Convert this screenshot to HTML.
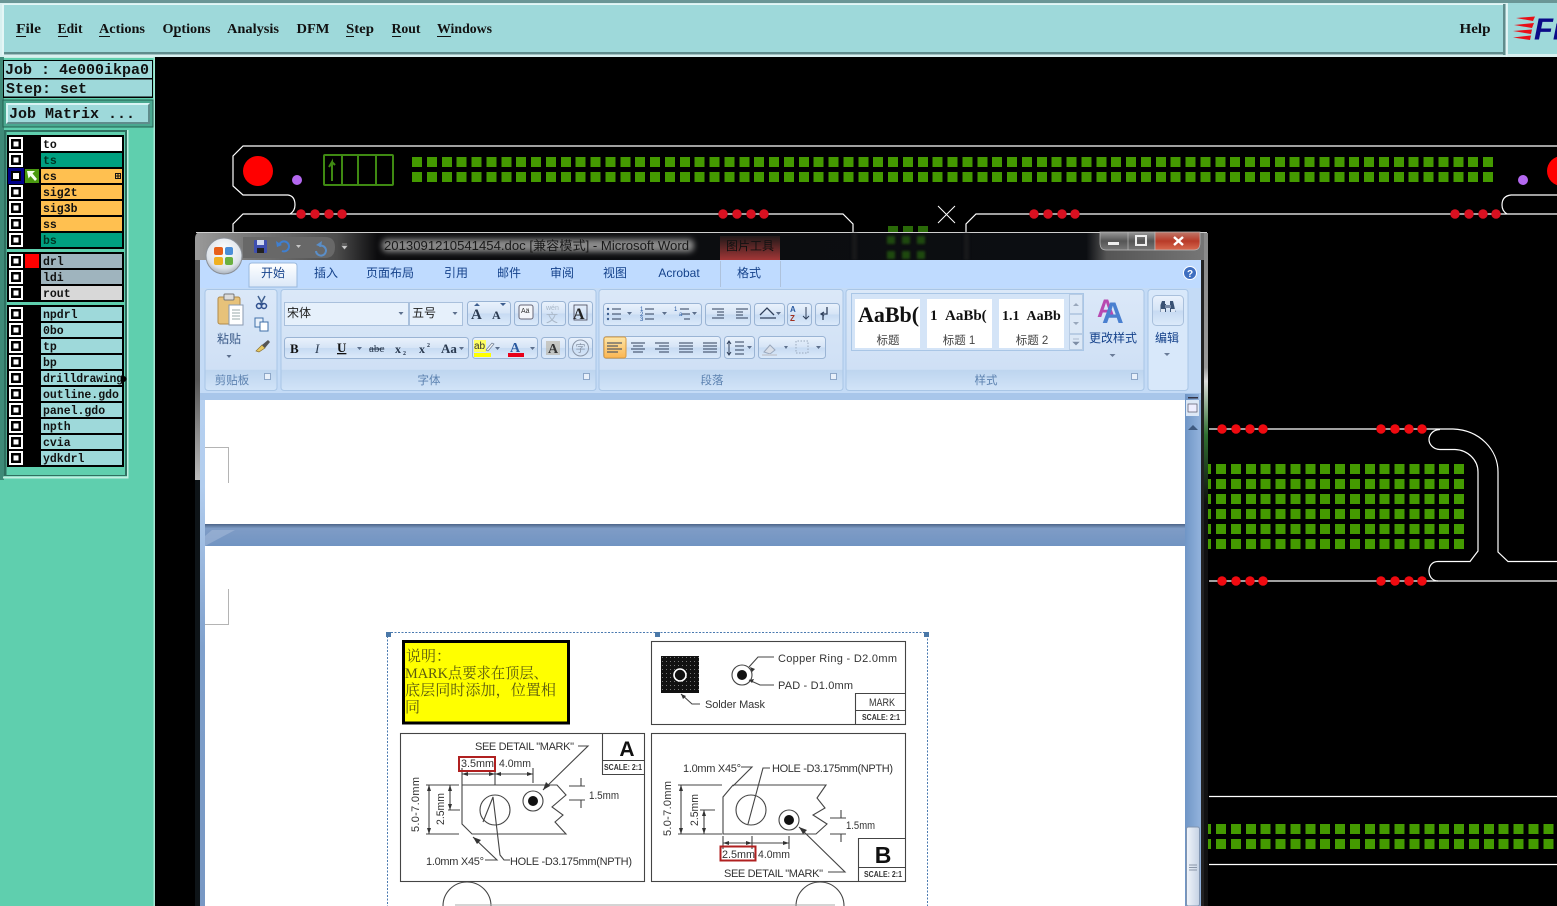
<!DOCTYPE html>
<html><head><meta charset="utf-8"><title>CAM</title>
<style>
html,body{margin:0;padding:0;background:#000;width:1557px;height:906px;overflow:hidden}
svg{display:block;position:absolute;left:0;top:0}
.m{font:bold 14px "Liberation Serif",serif;fill:#111}
.mo{font:bold 15px "Liberation Mono",monospace;fill:#111}
.l{font:bold 11.5px "Liberation Mono",monospace;fill:#111}
.t{font:12px "Liberation Sans","Noto Sans CJK SC",sans-serif;fill:#15428b}
.g{font:11.5px "Liberation Sans","Noto Sans CJK SC",sans-serif;fill:#5c82b0;text-anchor:middle}
.k{font:12px "Liberation Serif","Noto Sans CJK SC",sans-serif;fill:#222}
.s{font:11.5px "Liberation Sans","Noto Sans CJK SC",sans-serif;fill:#444;text-anchor:middle}
.d{font:11px "Liberation Sans",sans-serif;fill:#333}
.sc{font:bold 8px "Liberation Sans",sans-serif;fill:#333}
</style></head><body>
<svg width="1557" height="906" viewBox="0 0 1557 906" xmlns="http://www.w3.org/2000/svg">
<defs>
<linearGradient id="tb" x1="0" x2="1" y1="0" y2="0"><stop offset="0" stop-color="#9a9a9a"/><stop offset=".05" stop-color="#7a7a7a"/><stop offset=".14" stop-color="#4c4c4c"/><stop offset=".18" stop-color="#0c0c0e"/><stop offset=".88" stop-color="#0c0e12"/><stop offset=".9" stop-color="#555"/><stop offset="1" stop-color="#777"/></linearGradient>
<linearGradient id="rb" x1="0" x2="0" y1="0" y2="1"><stop offset="0" stop-color="#dbe8f8"/><stop offset=".79" stop-color="#cfe0f5"/><stop offset=".8" stop-color="#bed5ef"/><stop offset="1" stop-color="#d2e4f8"/></linearGradient>
<linearGradient id="bt" x1="0" x2="0" y1="0" y2="1"><stop offset="0" stop-color="#eaf2fc"/><stop offset=".5" stop-color="#d5e4f6"/><stop offset=".5" stop-color="#c6daf2"/><stop offset="1" stop-color="#dceafa"/></linearGradient>
<linearGradient id="tab" x1="0" x2="0" y1="0" y2="1"><stop offset="0" stop-color="#fff"/><stop offset="1" stop-color="#dbe8f8"/></linearGradient>
<linearGradient id="or" x1="0" x2="0" y1="0" y2="1"><stop offset="0" stop-color="#fde6a8"/><stop offset="1" stop-color="#fbb552"/></linearGradient>
<linearGradient id="gap" x1="0" x2="0" y1="0" y2="1"><stop offset="0" stop-color="#4c6488"/><stop offset=".2" stop-color="#7f9cc6"/><stop offset="1" stop-color="#7194c2"/></linearGradient>
<linearGradient id="red" x1="0" x2="0" y1="0" y2="1"><stop offset="0" stop-color="#c0786a"/><stop offset=".5" stop-color="#b83a28"/><stop offset="1" stop-color="#d86a50"/></linearGradient>
<linearGradient id="gb" x1="0" x2="0" y1="0" y2="1"><stop offset="0" stop-color="#999"/><stop offset=".5" stop-color="#555"/><stop offset="1" stop-color="#777"/></linearGradient>
<linearGradient id="ctx" x1="0" x2="0" y1="0" y2="1"><stop offset="0" stop-color="#201818"/><stop offset="1" stop-color="#a83838"/></linearGradient>
<linearGradient id="lf" x1="0" x2="0" y1="0" y2="1"><stop offset="0" stop-color="#555"/><stop offset="1" stop-color="#bbb"/></linearGradient>
<linearGradient id="lb" gradientUnits="userSpaceOnUse" x1="0" x2="0" y1="260" y2="906"><stop offset="0" stop-color="#bcd6f4"/><stop offset=".35" stop-color="#b2cdee"/><stop offset=".6" stop-color="#7fa0cc"/><stop offset="1" stop-color="#7898c4"/></linearGradient>
<linearGradient id="rf" x1="0" x2="0" y1="0" y2="1"><stop offset="0" stop-color="#888"/><stop offset=".2" stop-color="#999"/><stop offset=".22" stop-color="#ddd"/><stop offset=".3" stop-color="#2f6f30"/><stop offset=".4" stop-color="#111"/><stop offset="1" stop-color="#111"/></linearGradient>
<linearGradient id="sb" x1="0" x2="1" y1="0" y2="0"><stop offset="0" stop-color="#6f95c6"/><stop offset="1" stop-color="#8fb0da"/></linearGradient>
<linearGradient id="th" x1="0" x2="1" y1="0" y2="0"><stop offset="0" stop-color="#f0f4fa"/><stop offset="1" stop-color="#c5d2e4"/></linearGradient>
<radialGradient id="ob" cx=".5" cy=".35" r=".7"><stop offset="0" stop-color="#fff"/><stop offset=".7" stop-color="#dde3ea"/><stop offset="1" stop-color="#9aa4b0"/></radialGradient>
<pattern id="sm" x="661" y="656" width="4" height="4" patternUnits="userSpaceOnUse"><rect width="4" height="4" fill="#111"/><rect x="1" y="1" width="1" height="1" fill="#777"/></pattern>
<filter id="bl" x="-10%" y="-50%" width="120%" height="200%"><feGaussianBlur stdDeviation="3"/></filter>
<filter id="bl2"><feGaussianBlur stdDeviation="1.4"/></filter>
<g id="rd"><circle cx="0" cy="0" r="4.7"/></g>
<g id="four"><use href="#rd"/><use href="#rd" x="14"/><use href="#rd" x="28"/><use href="#rd" x="41"/></g>
<g id="cb"><rect x="9" y="0" width="14" height="14" fill="#fff"/><rect x="11" y="2" width="10" height="10" fill="#000"/><rect x="13.5" y="4.5" width="5" height="5" fill="#fff"/></g>
</defs>

<rect width="1557" height="906" fill="#000"/>

<!-- menu bar -->
<rect width="1557" height="57" fill="#d8f0f0"/>
<rect width="1557" height="3" fill="#6a9696"/>
<rect x="2" y="4" width="1503" height="51" fill="#e4f6f6"/>
<rect x="4" y="5" width="1501" height="47" fill="#9ed9da"/>
<rect x="4" y="52" width="1501" height="2.5" fill="#5f8c8c"/>
<rect x="1503" y="4" width="2.5" height="51" fill="#5f8c8c"/>
<rect x="1508" y="3" width="49" height="51" fill="#9ed9da"/>
<rect x="1506" y="3" width="1.5" height="54" fill="#e4f6f6"/>
<g class="m">
<text x="16" y="33" textLength="25" lengthAdjust="spacingAndGlyphs">File</text>
<text x="57.5" y="33" textLength="25" lengthAdjust="spacingAndGlyphs">Edit</text>
<text x="99" y="33" textLength="46" lengthAdjust="spacingAndGlyphs">Actions</text>
<text x="162.5" y="33" textLength="48" lengthAdjust="spacingAndGlyphs">Options</text>
<text x="227" y="33" textLength="52" lengthAdjust="spacingAndGlyphs">Analysis</text>
<text x="296.5" y="33" textLength="33" lengthAdjust="spacingAndGlyphs">DFM</text>
<text x="346" y="33" textLength="28" lengthAdjust="spacingAndGlyphs">Step</text>
<text x="391.5" y="33" textLength="29" lengthAdjust="spacingAndGlyphs">Rout</text>
<text x="437" y="33" textLength="55" lengthAdjust="spacingAndGlyphs">Windows</text>
<text x="1459.5" y="33" textLength="31" lengthAdjust="spacingAndGlyphs">Help</text>
</g>
<g fill="#111">
<rect x="16" y="36" width="10" height="1"/><rect x="58" y="36" width="10" height="1"/><rect x="99" y="36" width="11" height="1"/><rect x="173" y="36" width="8" height="1"/><rect x="346" y="36" width="8" height="1"/><rect x="392" y="36" width="9" height="1"/><rect x="437" y="36" width="14" height="1"/>
</g>
<!-- logo -->
<g fill="#e81018"><path d="M1516 18 L1535 16.500 L1533 21Z"/><path d="M1514 25 L1534 23 L1532 28Z"/><path d="M1513 31 L1532 29.500 L1531 34Z"/><path d="M1513 37.500 L1531 35.500 L1530 40Z"/></g>
<text x="1534" y="39.500" font-family="Liberation Sans" font-weight="bold" font-style="italic" font-size="31" fill="#0a0a88">Fr</text>

<!-- left panel -->
<rect x="0" y="57" width="155" height="849" fill="#5fcfae"/>
<rect x="0" y="57" width="155" height="1" fill="#c8efe4"/>
<rect x="0" y="57" width="4" height="423" fill="#3f8a78"/>
<rect x="153.5" y="57" width="1.5" height="849" fill="#a5e8d5"/>
<rect x="3" y="60" width="150" height="38" fill="#000"/>
<rect x="4" y="61" width="148" height="17" fill="#9ed9da"/>
<rect x="4" y="79.5" width="148" height="17" fill="#9ed9da"/>
<text class="mo" x="5" y="74">Job : 4e000ikpa0</text>
<text class="mo" x="6" y="93">Step: set</text>
<rect x="3" y="100" width="150" height="27" fill="#4aa890" stroke="#236050"/>
<rect x="6" y="103" width="144" height="21" fill="#5f8c8c"/>
<path d="M6 103h144l-2 2H8v17l-2 2z" fill="#d8f4f4"/>
<rect x="8" y="105" width="140" height="17" fill="#9ed9da"/>
<text class="mo" x="9" y="118">Job Matrix ...</text>

<rect x="4" y="130" width="123" height="346" fill="#2f6f60"/>
<rect x="6.500" y="132" width="118.500" height="343" fill="#5fcfae"/>
<rect x="127" y="130" width="1.500" height="348" fill="#c0efe0"/>
<rect x="3" y="476.500" width="125.500" height="2" fill="#c0efe0"/>
<rect x="7" y="135" width="117" height="114" fill="#000"/>
<rect x="7" y="252" width="117" height="50" fill="#000"/>
<rect x="7" y="305" width="117" height="162" fill="#000"/>

<g>
<rect x="41" y="137" width="81" height="14" fill="#fff"/>
<rect x="41" y="153" width="81" height="14" fill="#00a080"/>
<rect x="41" y="169" width="81" height="14" fill="#ffc050"/>
<rect x="41" y="185" width="81" height="14" fill="#ffc050"/>
<rect x="41" y="201" width="81" height="14" fill="#ffc050"/>
<rect x="41" y="217" width="81" height="14" fill="#ffc050"/>
<rect x="41" y="233" width="81" height="14" fill="#00a080"/>
<rect x="41" y="254" width="81" height="14" fill="#9fb4be"/>
<rect x="41" y="270" width="81" height="14" fill="#9fb4be"/>
<rect x="41" y="286" width="81" height="14" fill="#d8d8d8"/>
<rect x="41" y="307" width="81" height="14" fill="#9ed9da"/>
<rect x="41" y="323" width="81" height="14" fill="#9ed9da"/>
<rect x="41" y="339" width="81" height="14" fill="#9ed9da"/>
<rect x="41" y="355" width="81" height="14" fill="#9ed9da"/>
<rect x="41" y="371" width="81" height="14" fill="#9ed9da"/>
<rect x="41" y="387" width="81" height="14" fill="#9ed9da"/>
<rect x="41" y="403" width="81" height="14" fill="#9ed9da"/>
<rect x="41" y="419" width="81" height="14" fill="#9ed9da"/>
<rect x="41" y="435" width="81" height="14" fill="#9ed9da"/>
<rect x="41" y="451" width="81" height="14" fill="#9ed9da"/>
</g>
<use href="#cb" y="137"/><use href="#cb" y="153"/><use href="#cb" y="169"/><use href="#cb" y="185"/><use href="#cb" y="201"/><use href="#cb" y="217"/><use href="#cb" y="233"/>
<use href="#cb" y="254"/><use href="#cb" y="270"/><use href="#cb" y="286"/>
<use href="#cb" y="307"/><use href="#cb" y="323"/><use href="#cb" y="339"/><use href="#cb" y="355"/><use href="#cb" y="371"/><use href="#cb" y="387"/><use href="#cb" y="403"/><use href="#cb" y="419"/><use href="#cb" y="435"/><use href="#cb" y="451"/>
<rect x="8" y="168" width="16" height="16" fill="#000088"/><rect x="11" y="171" width="10" height="10" fill="#000"/><rect x="13" y="173" width="6" height="6" fill="#fff"/>
<rect x="25" y="169" width="14" height="14" fill="#4a9a10"/>
<path d="M27 171h8l-2.5 2.5L37 179l-2 2-4.500-5-2 2.500z" fill="#f4fff0"/>
<rect x="25" y="254" width="14" height="14" fill="#f00"/>
<rect x="115" y="173" width="6" height="6" fill="#111"/><rect x="116" y="174" width="1.500" height="1.500" fill="#ffc050"/><rect x="118.500" y="174" width="1.500" height="1.500" fill="#ffc050"/><rect x="116" y="176.500" width="1.500" height="1.500" fill="#ffc050"/><rect x="118.500" y="176.500" width="1.500" height="1.500" fill="#ffc050"/>
<g class="l">
<text x="43" y="148">to</text><text x="43" y="164" style="fill:#032">ts</text><text x="43" y="180">cs</text><text x="43" y="196">sig2t</text><text x="43" y="212">sig3b</text><text x="43" y="228">ss</text><text x="43" y="244" style="fill:#032">bs</text>
<text x="43" y="265">drl</text><text x="43" y="281">ldi</text><text x="43" y="297">rout</text>
<text x="43" y="318">npdrl</text><text x="43" y="334">0bo</text><text x="43" y="350">tp</text><text x="43" y="366">bp</text>
<text x="43" y="382" textLength="80" lengthAdjust="spacing">drilldrawing</text>
<text x="43" y="398">outline.gdo</text><text x="43" y="414">panel.gdo</text><text x="43" y="430">npth</text><text x="43" y="446">cvia</text><text x="43" y="462">ydkdrl</text>
</g>
<circle cx="123.500" cy="379" r="3" fill="#000"/>

<!-- board -->
<g fill="none" stroke="#fff" stroke-width="1.200">
<path d="M1557 146H243L233 156V186L243 195H288Q295 196 295 205Q295 211 290 214"/>
<path d="M233 232V224L243 214H843L853 224V232"/>
<path d="M966 232V224L976 214H1557"/>
<path d="M1557 195H1511Q1502 196 1502 205Q1502 211 1507 214"/>
<path d="M938 206L955 223M955 206L938 223" stroke-width="1"/>
<path d="M1209 429H1453C1480 430 1498 450 1498 472V552L1508 561.500H1557"/>
<path d="M1440 429.500C1433 429.500 1429 435 1429 439.500C1429 444 1433 449.500 1440 449.500H1455C1468 450 1478 460 1478 472V551L1470 561.500H1438C1432 561.500 1429 566 1429 571C1429 576 1432 581 1438 581"/>
<path d="M1209 581H1557"/>
<path d="M1209 796.500H1557M1209 864.500H1557"/>
</g>
<g stroke="#449a00" stroke-width="10" stroke-dasharray="10 4.875" fill="none" shape-rendering="crispEdges">
<path d="M412 162H1493M412 177H1493"/>
<path d="M1201.125 469H1464M1201.125 484H1464M1201.125 499H1464M1201.125 514H1464M1201.125 529H1464M1201.125 544H1464"/>
<path d="M1201.125 829H1557M1201.125 844H1557"/>
</g>
<g fill="#f00"><circle cx="258" cy="171" r="15"/><circle cx="1562" cy="171" r="15"/></g>
<g fill="#b468f0"><circle cx="297" cy="180" r="5"/><circle cx="1523" cy="180" r="5"/></g>
<g fill="none" stroke="#3f8a12" stroke-width="2"><rect x="324" y="155" width="69" height="30" rx="1"/><path d="M342 155V185M358 155V185M376 155V185"/><path d="M332 181V162L329 167M332 162L335 165"/></g>
<g fill="#d81020">
<use href="#four" x="301" y="214"/><use href="#four" x="723" y="214"/><use href="#four" x="1034" y="214"/><use href="#four" x="1455" y="214"/>
</g>
<g fill="#f00a10">
<use href="#four" x="1222" y="429"/><use href="#four" x="1381" y="429"/><use href="#four" x="1222" y="581"/><use href="#four" x="1381" y="581"/>
</g>
<g stroke="#2a6a08" stroke-width="10" stroke-dasharray="10 4.875" fill="none" shape-rendering="crispEdges"><path d="M888 231H928"/></g>

<!-- word frame -->
<path d="M201 232H1201Q1208 232 1208 239V906H195V239Q195 232 201 232Z" fill="url(#tb)"/>
<rect x="196" y="232" width="1011" height="1" fill="#cfcfcf"/>
<g filter="url(#bl2)" opacity=".55"><path d="M891 236V260M906 236V260M921 236V260" stroke="#2f7a10" stroke-width="8" stroke-dasharray="8 7" fill="none"/><rect x="852" y="233" width="5" height="27" fill="#222"/><rect x="964" y="233" width="5" height="27" fill="#222"/></g>
<rect x="382" y="239" width="312" height="13" rx="5" fill="#8a8a8a" filter="url(#bl)"/>
<rect x="720" y="236" width="60" height="25" fill="url(#ctx)"/>
<rect x="195" y="380" width="5" height="100" fill="url(#lf)"/>
<rect x="195" y="260" width="5" height="120" fill="#555"/>
<rect x="195" y="480" width="5" height="426" fill="#0e1418"/>
<rect x="200" y="260" width="5" height="646" fill="url(#lb)"/>
<rect x="1201" y="260" width="3" height="646" fill="#222"/>
<rect x="1204" y="233" width="4" height="673" fill="url(#rf)"/>
<rect x="1199" y="260" width="2" height="646" fill="#8fb0da"/>

<!-- ribbon -->
<rect x="200" y="260" width="1001" height="140" fill="#bfdbff"/>
<rect x="200" y="288" width="1001" height="106" fill="#c4dbf6"/>
<rect x="200" y="393" width="1001" height="7" fill="#a8c6ea"/>
<path d="M249 287V266Q249 263 252 263H294Q297 263 297 266V287Z" fill="url(#tab)" stroke="#9ab8dc"/>
<rect x="720" y="261" width=".8" height="26" fill="#a9bcd4"/><rect x="780" y="261" width=".8" height="26" fill="#a9bcd4"/>
<g class="t" text-anchor="middle">
<text x="273" y="277">开始</text><text x="326" y="277">插入</text><text x="390" y="277">页面布局</text><text x="456" y="277">引用</text><text x="509" y="277">邮件</text><text x="562" y="277">审阅</text><text x="615" y="277">视图</text><text x="679" y="277">Acrobat</text><text x="749" y="277">格式</text>
</g>
<circle cx="1190" cy="273" r="6.500" fill="#3f6fc0" stroke="#fff"/><text x="1190" y="277" text-anchor="middle" font-family="Liberation Sans" font-weight="bold" font-size="10" fill="#fff">?</text>

<!-- groups -->
<g stroke="#a9c6e6" fill="url(#rb)">
<rect x="205" y="289.500" width="72" height="101" rx="3"/>
<rect x="281" y="289.500" width="315" height="101" rx="3"/>
<rect x="599" y="289.500" width="244" height="101" rx="3"/>
<rect x="846" y="289.500" width="298" height="101" rx="3"/>
<rect x="1148" y="289.500" width="40" height="101" rx="3" fill="#d8e8fa"/>
</g>
<g class="g"><text x="232" y="384">剪贴板</text><text x="429" y="384">字体</text><text x="712" y="384">段落</text><text x="986" y="384">样式</text></g>
<g fill="#e8f0fa" stroke="#7c98bc" stroke-width=".8"><rect x="264.500" y="373.500" width="6" height="6"/><rect x="583.500" y="373.500" width="6" height="6"/><rect x="830.500" y="373.500" width="6" height="6"/><rect x="1131.500" y="373.500" width="6" height="6"/></g>

<!-- clipboard -->
<rect x="218" y="297" width="22" height="27" rx="2" fill="#e7c27a" stroke="#b08a4a"/>
<rect x="224" y="294" width="10" height="6" rx="1" fill="#dcdcdc" stroke="#777"/>
<path d="M229 305h14v20h-14z" fill="#fff" stroke="#8a9ab0"/><path d="M232 310h8M232 313h8M232 316h8M232 319h8" stroke="#9aa"/>
<text x="229" y="343" class="t" text-anchor="middle" style="fill:#3a5a88">粘贴</text>
<path d="M226.500 355h5l-2.500 3z" fill="#5c6f8c"/>
<path d="M258 296l5 9M265 296l-5 9" stroke="#3f5f8f" stroke-width="1.500"/><circle cx="259" cy="306" r="2.500" fill="none" stroke="#2f4f8f" stroke-width="1.500"/><circle cx="264" cy="306" r="2.500" fill="none" stroke="#2f4f8f" stroke-width="1.500"/>
<rect x="255" y="318" width="8" height="9" fill="#e8f0fa" stroke="#3f6fa8"/><rect x="260" y="322" width="8" height="9" fill="#fff" stroke="#3f6fa8"/>
<path d="M256 351l6-6 3 3-6 4z" fill="#e8c860" stroke="#8a7030" stroke-width=".7"/><path d="M262 345l6-5 2 2-5 6z" fill="#555"/>

<!-- font -->
<rect x="284.500" y="302.500" width="124" height="23" fill="#e6f0fb" stroke="#a9c0dc"/>
<rect x="409.500" y="302.500" width="53" height="23" fill="#e6f0fb" stroke="#a9c0dc"/>
<text class="k" x="287" y="317">宋体</text><text class="k" x="412" y="317">五号</text>
<path d="M398.500 312h5l-2.500 3zM452.500 312h5l-2.500 3z" fill="#5c6f8c"/>
<g fill="url(#bt)" stroke="#9ab4d4">
<rect x="467.500" y="301.500" width="43" height="24" rx="3"/><rect x="514.500" y="301.500" width="24" height="24" rx="3"/><rect x="541.500" y="301.500" width="24" height="24" rx="3"/><rect x="568.500" y="301.500" width="24" height="24" rx="3"/>
<rect x="284.500" y="337.500" width="184" height="21" rx="3"/><rect x="472.500" y="337.500" width="65" height="21" rx="3"/><rect x="541.500" y="337.500" width="24" height="21" rx="3"/><rect x="568.500" y="337.500" width="24" height="21" rx="3"/>
</g>
<g font-family="Liberation Serif" font-weight="bold" fill="#2a3a50">
<text x="471" y="319" font-size="15">A</text><text x="492" y="319" font-size="12">A</text>
<text x="573" y="319" font-size="16" fill="#222">A</text>
<text x="290" y="353" font-size="13" fill="#111">B</text><text x="315" y="353" font-size="13" font-style="italic" font-weight="normal">I</text><text x="337" y="352" font-size="13" text-decoration="underline" fill="#111">U</text>
<text x="369" y="352" font-size="11" text-decoration="line-through" font-weight="normal">abc</text>
<text x="395" y="353" font-size="12">x</text><text x="403" y="355" font-size="6">2</text><text x="419" y="353" font-size="12">x</text><text x="427" y="347" font-size="6">2</text>
<text x="441" y="353" font-size="13">Aa</text>
<text x="510" y="352" font-size="14" fill="#2a5aa0">A</text>
</g>
<rect x="546" y="341" width="14" height="14" fill="#b8b0a0" opacity=".6"/>
<text x="548" y="353" font-family="Liberation Serif" font-weight="bold" font-size="14" fill="#333">A</text>
<rect x="474" y="353" width="17" height="4" fill="#ff0"/><rect x="508" y="353" width="16" height="4" fill="#e8001a"/>
<rect x="474" y="340" width="12" height="12" fill="#ffff60"/>
<text x="474" y="349" font-family="Liberation Sans" font-size="10" fill="#333">ab</text><path d="M486 350l6-7 2 1-6 7z" fill="#f4f4f4" stroke="#6a7a90" stroke-width=".7"/>
<rect x="519" y="305" width="14" height="14" rx="2" fill="#f4f6fa" stroke="#667"/><text x="521" y="313" font-family="Liberation Sans" font-size="7" fill="#333">Aä</text>
<text x="546" y="310" font-family="Liberation Sans" font-size="7" fill="#aab8c8">wén</text><text x="546" y="322" font-family="Noto Sans CJK SC" font-size="12" fill="#aab8c8">文</text>
<rect x="574" y="305" width="13" height="15" fill="none" stroke="#445" stroke-width=".8"/>
<circle cx="580.500" cy="348" r="8" fill="none" stroke="#8a96a8"/><text x="580.500" y="352" text-anchor="middle" font-family="Noto Sans CJK SC" font-size="10" fill="#8a96a8">字</text>
<path d="M357 347h5l-2.500 3zM459 347h5l-2.500 3zM495 347h5l-2.500 3zM530 347h5l-2.500 3z" fill="#5c6f8c"/>
<path d="M474 306l3-3 3 3zM500 303h6l-3 3z" fill="#3f5f8f"/>

<!-- paragraph -->
<g fill="url(#bt)" stroke="#9ab4d4">
<rect x="603.500" y="303.500" width="98" height="22" rx="3"/><rect x="705.500" y="303.500" width="45" height="22" rx="3"/><rect x="754.500" y="303.500" width="30" height="22" rx="3"/><rect x="787.500" y="303.500" width="24" height="22" rx="3"/><rect x="815.500" y="303.500" width="24" height="22" rx="3"/>
<rect x="603.500" y="336.500" width="117" height="22" rx="3"/><rect x="724.500" y="336.500" width="30" height="22" rx="3"/><rect x="758.500" y="336.500" width="67" height="22" rx="3"/>
</g>
<rect x="604" y="337" width="22" height="21" rx="2" fill="url(#or)" stroke="#d89a40"/>
<g stroke="#2f3f5a" fill="none" stroke-width="1">
<path d="M612 309h9M612 314h9M612 319h9M645 309h9M645 314h9M645 319h9M680 309h9M682 314h8M684 319h6"/>
<path d="M712 309h12M717 312h7M717 315h7M712 318h12M736 309h12M736 312h7M736 315h7M736 318h12"/>
<path d="M607 343h15M607 346h11M607 349h15M607 352h11"/>
<path d="M631 343h14M633 346h10M631 349h14M633 352h10M655 343h14M659 346h10M655 349h14M659 352h10M679 343h14M679 346h14M679 349h14M679 352h14M703 343h14M703 346h14M703 349h14M703 352h14M735 342h9M735 346h9M735 350h9M735 354h9"/>
<path d="M729 342v12M727 344l2-3 2 3M727 352l2 3 2-3"/>
<path d="M806 307v12M803 316l3 3 3-3"/><path d="M760 315l7-7 7 7M760 318h16" stroke-width="1.300"/>
<path d="M827 307v7h-6M824 312l-3 2 3 2M823 320v-4" stroke-width="1.300"/>
<path d="M796 341v12h12v-12z" stroke="#99a8bc" stroke-dasharray="1.500 1.500"/>
</g>
<g fill="#3f5f8f"><circle cx="608" cy="309" r="1.200"/><circle cx="608" cy="314" r="1.200"/><circle cx="608" cy="319" r="1.200"/></g>
<g font-family="Liberation Sans" font-size="6" fill="#2a5aa0"><text x="640" y="311">1</text><text x="640" y="316">2</text><text x="640" y="321">3</text><text x="674" y="311">1</text><text x="679" y="316">a</text></g>
<text x="790" y="312" font-family="Liberation Sans" font-weight="bold" font-size="8" fill="#2a5aa0">A</text><text x="790" y="321" font-family="Liberation Sans" font-weight="bold" font-size="8" fill="#a03020">Z</text>
<path d="M764 352l6-7 5 5-5 4z" fill="#d8dee8" stroke="#9aa8bc"/><rect x="762" y="354" width="15" height="2" fill="#c8d0dc"/>
<path d="M627 312h5l-2.500 3zM662 312h5l-2.500 3zM692 312h5l-2.500 3zM776 312h5l-2.500 3zM747 346h5l-2.500 3zM784 346h4l-2 3zM816 346h5l-2.500 3z" fill="#5c6f8c"/>

<!-- styles -->
<rect x="851.500" y="293.500" width="232" height="57" fill="#d4e4f7" stroke="#a9c6e6"/>
<rect x="855" y="299" width="65" height="49" fill="#fff"/><rect x="927" y="299" width="65" height="49" fill="#fff"/><rect x="999" y="299" width="65" height="49" fill="#fff"/>
<svg x="855" y="299" width="65" height="49" viewBox="0 0 65 49"><text x="3" y="23" font-family="Liberation Serif" font-weight="bold" font-size="22" fill="#111">AaBb(</text></svg>
<svg x="927" y="299" width="65" height="49" viewBox="0 0 65 49"><text x="3" y="21" font-family="Liberation Serif" font-weight="bold" font-size="15" fill="#111">1&#160;&#160;AaBb(</text></svg>
<svg x="999" y="299" width="65" height="49" viewBox="0 0 65 49"><text x="3" y="21" font-family="Liberation Serif" font-weight="bold" font-size="14" fill="#111">1.1&#160;&#160;AaBb</text></svg>
<g class="s"><text x="888" y="344">标题</text><text x="959" y="344">标题 1</text><text x="1032" y="344">标题 2</text></g>
<g fill="#dce8f6" stroke="#b8cce4"><rect x="1069.500" y="294.500" width="13" height="19"/><rect x="1069.500" y="314.500" width="13" height="19"/><rect x="1069.500" y="334.500" width="13" height="15"/></g>
<path d="M1073 306h6l-3-3zM1073 322h6l-3 3z" fill="#99a8bc"/><path d="M1073 339h6M1073 342h6l-3 3z" fill="#7c8ca4" stroke="#7c8ca4" stroke-width=".6"/>
<text x="1097" y="317" font-family="Liberation Sans" font-weight="bold" font-size="25" fill="#b84ab0">A</text><text x="1102" y="323" font-family="Liberation Sans" font-weight="bold" font-size="30" fill="#4a80d0">A</text>
<text x="1113" y="342" class="t" text-anchor="middle">更改样式</text>
<path d="M1109.500 354h6l-3 3z" fill="#6a7c98"/>

<!-- edit -->
<rect x="1152.500" y="295.500" width="31" height="30" rx="4" fill="url(#bt)" stroke="#a9c0dc"/>
<path d="M1162 301h3v3h1v8h-5.500v-7zM1170 301h3l1 4 1.500 7H1170v-8h0z" fill="#3a5274"/><rect x="1165" y="305" width="6" height="3" fill="#7a8ca8"/><rect x="1161" y="309" width="4" height="3" fill="#dfe8f4"/><rect x="1171" y="309" width="4" height="3" fill="#dfe8f4"/>
<text x="1167" y="342" class="t" text-anchor="middle">编辑</text>
<path d="M1164 353h6l-3 3z" fill="#6a7c98"/>

<!-- titlebar contents -->
<circle cx="224" cy="256" r="18" fill="url(#ob)" stroke="#8a8f96"/>
<rect x="214" y="247" width="9" height="8" rx="2" fill="#e8601a"/><rect x="225" y="247" width="8" height="8" rx="2" fill="#4a8ed8"/><rect x="214" y="257" width="9" height="8" rx="2" fill="#f0b020"/><rect x="225" y="257" width="8" height="8" rx="2" fill="#6ab040"/>
<path d="M243 237H325Q335 237 335 247Q335 258 325 258H243Z" fill="#686868"/>
<rect x="254" y="240" width="13" height="13" rx="1" fill="#3f4fb0"/><rect x="257" y="240" width="7" height="5" fill="#d0d8f0"/><rect x="257" y="248" width="7" height="5" fill="#222"/>
<path d="M279 246a5 5 0 1 1 3 5" fill="none" stroke="#3f7fd0" stroke-width="2"/><path d="M276 241l1 6 5-2z" fill="#3f7fd0"/>
<path d="M296 245h5l-2.500 3z" fill="#c8c8c8"/>
<path d="M319 246a5 5 0 1 1-3 5" fill="none" stroke="#5a8ec8" stroke-width="2"/><path d="M322 241l-1 6-5-2z" fill="#5a8ec8"/>
<path d="M342 244h5M342 246h5l-2.500 3z" stroke="#bbb" stroke-width=".6" fill="#ccc"/>
<text x="384" y="250" font-family="Liberation Sans,Noto Sans CJK SC,sans-serif" font-size="12.500" fill="#1a1a1a" textLength="305" lengthAdjust="spacingAndGlyphs">2013091210541454.doc [兼容模式] - Microsoft Word</text>
<text x="726" y="250" font-family="Liberation Sans,Noto Sans CJK SC,sans-serif" font-size="12" fill="#111">图片工具</text>
<path d="M1100 232V243Q1100 250 1106 250H1155V232Z" fill="url(#gb)" stroke="#bbb" stroke-width=".7"/>
<path d="M1155 232V250H1194Q1200 250 1200 243V232Z" fill="url(#red)" stroke="#bbb" stroke-width=".7"/>
<path d="M1128 232V250" stroke="#bbb" stroke-width=".7"/>
<rect x="1108" y="242" width="11" height="3" fill="#eee"/>
<rect x="1136" y="236" width="10" height="9" fill="none" stroke="#eee" stroke-width="2"/>
<path d="M1174 237l9 8M1183 237l-9 8" stroke="#fff" stroke-width="2.500"/>

<!-- document -->
<rect x="205" y="400" width="980" height="506" fill="#fff"/>
<rect x="205" y="524" width="980" height="22" fill="url(#gap)"/>
<path d="M205 546L235 530H212L205 536Z" fill="#a9bedc" opacity=".5"/>
<path d="M205 447.500H228.500V483M228.500 589V624.500H205" fill="none" stroke="#b4b4b4"/>
<!-- scrollbar -->
<rect x="1185" y="394" width="14" height="512" fill="url(#sb)"/>
<rect x="1186" y="400" width="13" height="16" fill="#dde8f6"/>
<rect x="1188" y="397" width="10" height="1.500" fill="#334"/>
<rect x="1188" y="404" width="9" height="8" fill="#eef" stroke="#556" stroke-width=".7"/>
<path d="M1188 430h10l-5-5z" fill="#3f5a80"/>
<rect x="1186.500" y="827" width="13" height="79" rx="2" fill="url(#th)" stroke="#8094b0"/>
<path d="M1189 865h8M1189 867.500h8M1189 870h8" stroke="#8a96a8"/>

<!-- picture selection -->
<rect x="387.500" y="632.500" width="540" height="280" fill="none" stroke="#4a7ab0" stroke-dasharray="2 1.500"/>
<g fill="#4a78a8"><rect x="386" y="632" width="5" height="5"/><rect x="655" y="632" width="5" height="5"/><rect x="924" y="632" width="5" height="5"/></g>

<rect x="403.500" y="641.500" width="165" height="81.500" fill="#ff0" stroke="#000" stroke-width="3"/>
<g font-family="Noto Serif CJK SC,Liberation Serif,serif" font-size="15" fill="#5a5a10">
<text x="406" y="661">说明：</text>
<text x="405" y="678" textLength="143" lengthAdjust="spacingAndGlyphs"><tspan font-family="Liberation Serif">MARK</tspan>点要求在顶层、</text>
<text x="405" y="695" textLength="151" lengthAdjust="spacingAndGlyphs">底层同时添加，位置相</text>
<text x="405" y="712">同</text>
</g>

<!-- drawing boxes -->
<g fill="none" stroke="#444" stroke-width="1.100">
<rect x="400.500" y="733.500" width="244" height="148"/>
<path d="M602.500 733.500V774.500H644M602.500 760.500H644"/>
<rect x="651.500" y="641.500" width="254" height="83"/>
<path d="M855.500 724V693.500H905M855.500 710.500H905"/>
<rect x="651.500" y="733.500" width="254" height="148"/>
<path d="M858.500 881V838.500H905M858.500 867.500H905"/>

<!-- A -->
<path d="M462 785H557L566 795L552 807L563 815L555 822L566 834H472L462 824V785"/>
<circle cx="495" cy="810" r="15"/>
<circle cx="533" cy="801" r="10"/>
<path d="M578 746H588L543 790"/>
<path d="M462 768V785M495 768V785M533 768V783M462 774H533"/>
<path d="M426 785H459M426 834H459M429 785V834M448 810H460M450 785V810"/>
<path d="M569 786H585M569 800H585M581 778V786M581 800V808"/>
<path d="M485 860H497L473 837M510 860H504L500 855L493 797L483 822"/>

<!-- B -->
<path d="M733 785H826L817 798L825 808L813 815L827 824L816 834H723V797Z"/>
<circle cx="751" cy="810" r="15"/>
<circle cx="789" cy="820" r="10"/>
<path d="M741 767H752L733 786M770 768H763L748 824"/>
<path d="M828 872H845L799 827"/>
<path d="M723 836V849M752 836V849M789 836V849M723 843H789"/>
<path d="M678 785H722M678 834H722M681 785V834M700 810H715M704 810V834"/>
<path d="M830 818H846M830 834H846M841 810V818M841 834V842"/>

<!-- MARK -->
<circle cx="742" cy="675" r="10"/>
<path d="M749 667L758 657H774M749 680L760 685H774M681 694L692 704H700"/>

<path d="M443 906A24 24 0 0 1 491 906M796 906A24 24 0 0 1 844 906"/>
<path d="M455 905H835" stroke="#aaa"/>
</g>
<g fill="#111"><circle cx="533" cy="801" r="5"/><circle cx="789" cy="820" r="5"/><circle cx="742" cy="675" r="5"/></g>
<rect x="661" y="656" width="38" height="37" fill="url(#sm)"/>
<circle cx="680" cy="675" r="6" fill="#111" stroke="#fff" stroke-width="1.600"/>
<g fill="none" stroke="#b02020" stroke-width="2"><rect x="459" y="757" width="36" height="14"/><rect x="720.500" y="846.500" width="35" height="14"/></g>
<g fill="#333"><path d="M543 790l3-8 4 4zM473 837l8 3-4 4zM799 827l8 3-4 4zM462 774l6-2v4zM495 774l-6-2v4zM495 774l6-2v4zM533 774l-6-2v4zM429 785l-2 6h4zM429 834l-2-6h4zM450 785l-2 6h4zM450 810l-2-6h4zM681 785l-2 6h4zM681 834l-2-6h4zM704 810l-2 6h4zM704 834l-2-6h4zM723 843l6-2v4zM752 843l-6-2v4zM789 843l-6-2v4zM750 667l2 5 3-3zM749 680l5-1-2 4zM681 694l5 2-3 3z"/></g>
<g class="d">
<text x="475" y="750" textLength="99" lengthAdjust="spacing">SEE DETAIL "MARK"</text>
<text x="461" y="767" textLength="33" lengthAdjust="spacingAndGlyphs">3.5mm</text><text x="499" y="767" textLength="32" lengthAdjust="spacingAndGlyphs">4.0mm</text>
<text x="589" y="799" textLength="30" lengthAdjust="spacingAndGlyphs">1.5mm</text>
<text x="426" y="865" textLength="58" lengthAdjust="spacing">1.0mm X45°</text>
<text x="510" y="865" textLength="122" lengthAdjust="spacing">HOLE -D3.175mm(NPTH)</text>
<text transform="translate(419,832) rotate(-90)" textLength="55" lengthAdjust="spacing">5.0-7.0mm</text>
<text transform="translate(444,825) rotate(-90)" textLength="32" lengthAdjust="spacingAndGlyphs">2.5mm</text>
<text x="778" y="662" textLength="119" lengthAdjust="spacing">Copper Ring - D2.0mm</text>
<text x="778" y="689" textLength="75" lengthAdjust="spacing">PAD - D1.0mm</text>
<text x="705" y="708" textLength="60" lengthAdjust="spacing">Solder Mask</text>
<text x="869" y="706" textLength="26" lengthAdjust="spacingAndGlyphs">MARK</text>
<text x="683" y="772" textLength="58" lengthAdjust="spacing">1.0mm X45°</text>
<text x="772" y="772" textLength="121" lengthAdjust="spacing">HOLE -D3.175mm(NPTH)</text>
<text x="722" y="858" textLength="33" lengthAdjust="spacingAndGlyphs">2.5mm</text><text x="758" y="858" textLength="32" lengthAdjust="spacingAndGlyphs">4.0mm</text>
<text x="846" y="829" textLength="29" lengthAdjust="spacingAndGlyphs">1.5mm</text>
<text x="724" y="877" textLength="99" lengthAdjust="spacing">SEE DETAIL "MARK"</text>
<text transform="translate(671,836) rotate(-90)" textLength="55" lengthAdjust="spacing">5.0-7.0mm</text>
<text transform="translate(698,826) rotate(-90)" textLength="32" lengthAdjust="spacingAndGlyphs">2.5mm</text>
</g>
<g class="sc">
<text x="604" y="770" textLength="38" lengthAdjust="spacingAndGlyphs">SCALE: 2:1</text>
<text x="862" y="720" textLength="38" lengthAdjust="spacingAndGlyphs">SCALE: 2:1</text>
<text x="864" y="877" textLength="38" lengthAdjust="spacingAndGlyphs">SCALE: 2:1</text>
</g>
<text x="627" y="756" text-anchor="middle" font-family="Liberation Sans" font-weight="bold" font-size="21" fill="#111">A</text>
<text x="883" y="863" text-anchor="middle" font-family="Liberation Sans" font-weight="bold" font-size="23" fill="#111">B</text>
</svg>
</body></html>
